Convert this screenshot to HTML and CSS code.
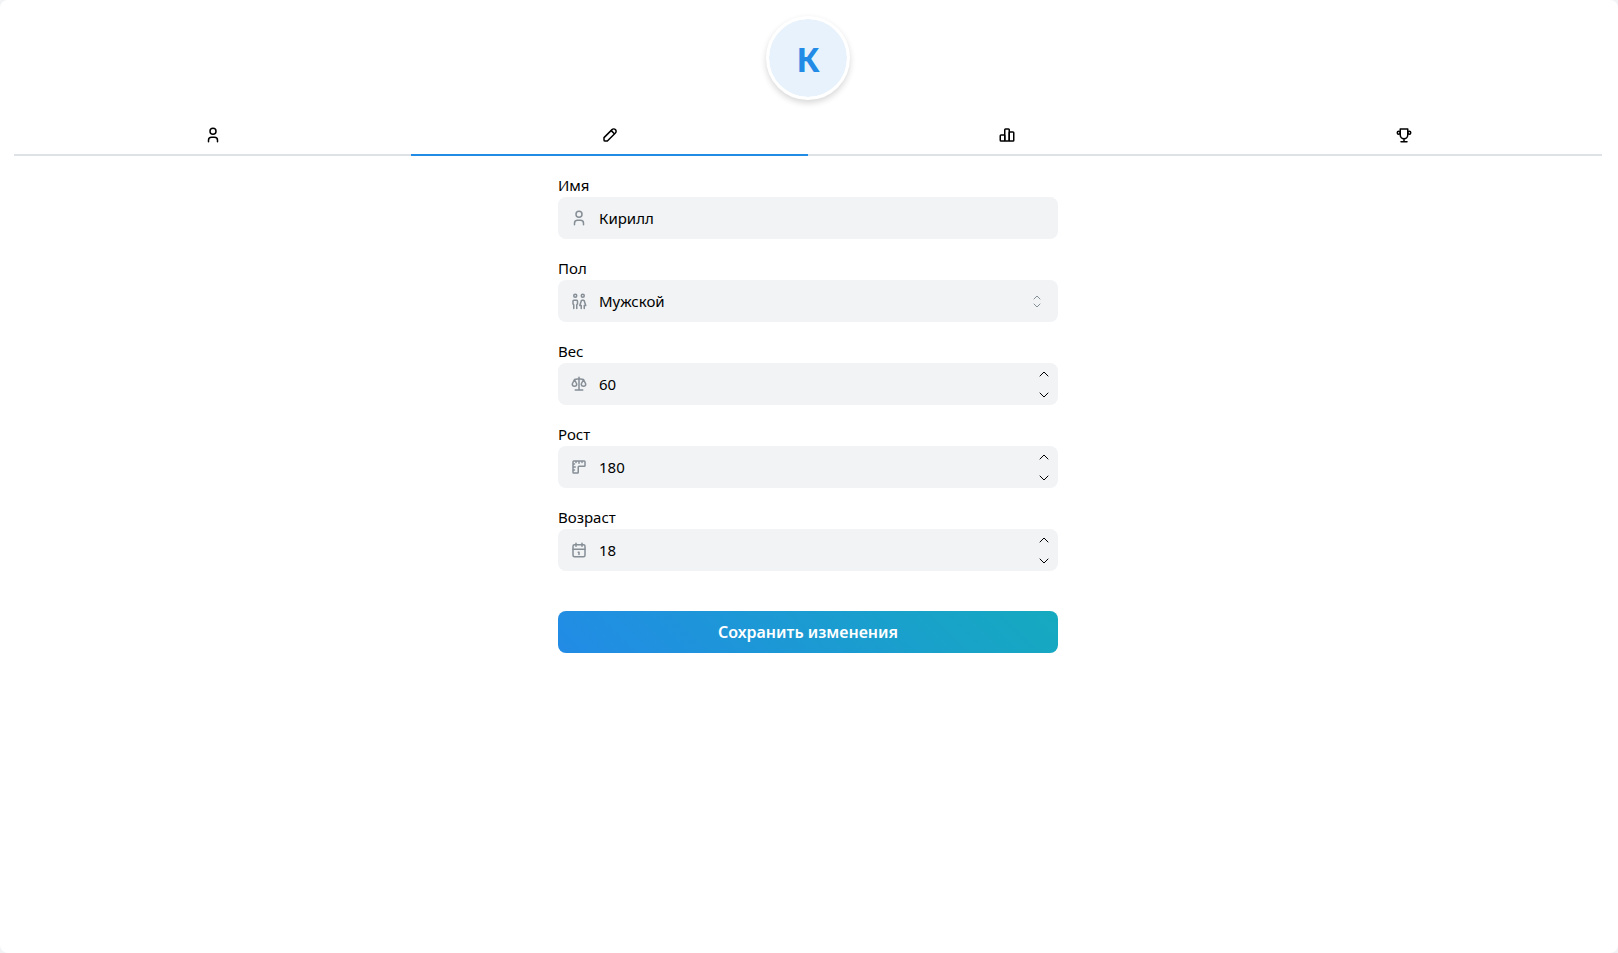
FILE: index.html
```html
<!DOCTYPE html>
<html lang="ru">
<head>
<meta charset="utf-8">
<meta name="viewport" content="width=device-width, initial-scale=1">
<title>Профиль</title>
<link rel="stylesheet" href="styles.css">
</head>
<body>
<main class="page">
  <div class="avatar">К</div>
  <div class="tabs" role="tablist">
    <button class="tab" type="button" role="tab" aria-label="Профиль">
      <svg class="icon" viewBox="0 0 24 24"><circle cx="12" cy="7" r="4"/><path d="M6 21v-2a4 4 0 0 1 4-4h4a4 4 0 0 1 4 4v2"/></svg>
    </button>
    <button class="tab tab-active" type="button" role="tab" aria-selected="true" aria-label="Редактирование">
      <svg class="icon" viewBox="0 0 24 24"><path d="M4 15.500v3a1.500 1.500 0 0 0 1.500 1.500h3L19.200 9.300a3 3 0 0 0-4.500-4.500z"/><path d="M14 6.500l3.500 3.500"/></svg>
    </button>
    <button class="tab" type="button" role="tab" aria-label="Статистика">
      <svg class="icon" viewBox="0 0 24 24"><rect x="3" y="12" width="6" height="8" rx="1"/><rect x="9" y="4" width="6" height="16" rx="1"/><rect x="15" y="8" width="6" height="12" rx="1"/></svg>
    </button>
    <button class="tab" type="button" role="tab" aria-label="Достижения">
      <svg class="icon" viewBox="0 0 24 24"><path d="M8 21h8M12 17v4M7 4h10M17 4v8a5 5 0 0 1-10 0V4"/><circle cx="5" cy="9" r="2"/><circle cx="19" cy="9" r="2"/></svg>
    </button>
  </div>
  <form class="form">
    <div class="field">
      <label class="label" for="name">Имя</label>
      <div class="control">
        <svg class="icon control-icon" viewBox="0 0 24 24"><circle cx="12" cy="7" r="4"/><path d="M6 21v-2a4 4 0 0 1 4-4h4a4 4 0 0 1 4 4v2"/></svg>
        <input class="input" id="name" type="text" value="Кирилл">
      </div>
    </div>
    <div class="field">
      <label class="label" for="sex">Пол</label>
      <div class="control">
        <svg class="icon control-icon" viewBox="0 0 24 24"><circle cx="7" cy="5" r="2"/><path d="M5 22v-5l-1-1v-4a1 1 0 0 1 1-1h4a1 1 0 0 1 1 1v4l-1 1v5"/><circle cx="17" cy="5" r="2"/><path d="M15 22v-4h-2l2-6a1 1 0 0 1 1-1h2a1 1 0 0 1 1 1l2 6h-2v4"/></svg>
        <select class="input" id="sex"><option>Мужской</option><option>Женский</option></select>
        <svg class="icon select-icon" viewBox="0 0 16 16"><path d="M5 6l3-3 3 3M5 11l3 3 3-3"/></svg>
      </div>
    </div>
    <div class="field">
      <label class="label" for="weight">Вес</label>
      <div class="control">
        <svg class="icon control-icon" viewBox="0 0 24 24"><path d="M7 20h10M6 6l6-1 6 1M12 3v17M9 12L6 6l-3 6a3 3 0 0 0 6 0M21 12l-3-6-3 6a3 3 0 0 0 6 0"/></svg>
        <input class="input" id="weight" type="number" value="60">
        <div class="steps">
          <button class="step" type="button" aria-label="Увеличить"><svg class="chevron" viewBox="0 0 10 6"><path d="M1 5l4-4 4 4"/></svg></button>
          <button class="step" type="button" aria-label="Уменьшить"><svg class="chevron" viewBox="0 0 10 6"><path d="M1 1l4 4 4-4"/></svg></button>
        </div>
      </div>
    </div>
    <div class="field">
      <label class="label" for="height">Рост</label>
      <div class="control">
        <svg class="icon control-icon" viewBox="0 0 24 24"><path d="M5 4h14a1 1 0 0 1 1 1v5a1 1 0 0 1-1 1h-7a1 1 0 0 0-1 1v7a1 1 0 0 1-1 1H5a1 1 0 0 1-1-1V5a1 1 0 0 1 1-1M4 8h2M4 12h3M4 16h2M8 4v2M12 4v3M16 4v2"/></svg>
        <input class="input" id="height" type="number" value="180">
        <div class="steps">
          <button class="step" type="button" aria-label="Увеличить"><svg class="chevron" viewBox="0 0 10 6"><path d="M1 5l4-4 4 4"/></svg></button>
          <button class="step" type="button" aria-label="Уменьшить"><svg class="chevron" viewBox="0 0 10 6"><path d="M1 1l4 4 4-4"/></svg></button>
        </div>
      </div>
    </div>
    <div class="field">
      <label class="label" for="age">Возраст</label>
      <div class="control">
        <svg class="icon control-icon" viewBox="0 0 24 24"><rect x="4" y="5" width="16" height="16" rx="2"/><path d="M16 3v4M8 3v4M4 11h16M11 15h1M12 15v3"/></svg>
        <input class="input" id="age" type="number" value="18">
        <div class="steps">
          <button class="step" type="button" aria-label="Увеличить"><svg class="chevron" viewBox="0 0 10 6"><path d="M1 5l4-4 4 4"/></svg></button>
          <button class="step" type="button" aria-label="Уменьшить"><svg class="chevron" viewBox="0 0 10 6"><path d="M1 1l4 4 4-4"/></svg></button>
        </div>
      </div>
    </div>
    <button class="submit" type="submit">Сохранить изменения</button>
  </form>
</main>
</body>
</html>
```
FILE: styles.css
```css
* {
  box-sizing: border-box;
}

body {
  margin: 0;
  background: #f1f3f5;
  color: #000;
  font-family: "Noto Sans", "Open Sans", sans-serif;
  font-size: 15px;
  line-height: 25px;
}

button,
input,
select {
  margin: 0;
  border: 0;
  padding: 0;
  background: none;
  color: inherit;
  font: inherit;
}

button {
  cursor: pointer;
}

.page {
  display: flex;
  flex-direction: column;
  min-height: 100vh;
  padding: 16px 16px 16px 14px;
  border-radius: 8px;
  background: #fff;
}

.avatar {
  display: flex;
  align-items: center;
  justify-content: center;
  align-self: center;
  width: 84px;
  height: 84px;
  border: 3px solid #fff;
  border-radius: 50%;
  background: #e7f2fc;
  background-clip: padding-box;
  box-shadow: 0 3px 6px rgba(0, 0, 0, 0.16);
  padding-top: 2px;
  color: #228be6;
  font-size: 34px;
  font-weight: 700;
}

.icon {
  width: 18px;
  height: 18px;
  fill: none;
  stroke: currentColor;
  stroke-width: 2;
  stroke-linecap: round;
  stroke-linejoin: round;
}

.tabs {
  display: flex;
  margin-top: 16px;
}

.tab {
  display: flex;
  flex: 1;
  align-items: center;
  justify-content: center;
  height: 40px;
  border-bottom: 2px solid #dee2e6;
}

.tab-active {
  border-color: #228be6;
}

.form {
  display: flex;
  flex-direction: column;
  gap: 16px;
  align-self: center;
  width: 100%;
  max-width: 500px;
  margin-top: 16px;
}

.field {
  display: flex;
  flex-direction: column;
}

.label {
  padding-top: 2px;
  line-height: 23px;
}

.control {
  display: grid;
  grid-template-columns: 41px 1fr auto;
  align-items: center;
  height: 42px;
  border-radius: 8px;
  background: #f1f3f5;
}

.control-icon {
  justify-self: center;
  color: #868e96;
}

.input {
  width: 100%;
  height: 42px;
  outline: 0;
  appearance: none;
}

.input[type="number"] {
  appearance: textfield;
}

.select-icon {
  width: 16px;
  height: 16px;
  margin-right: 13px;
  color: #868e96;
  stroke-width: 1;
}

.steps {
  display: flex;
  flex-direction: column;
  width: 28px;
}

.step {
  display: flex;
  align-items: center;
  justify-content: center;
  height: 21px;
}

.chevron {
  width: 10px;
  height: 6px;
  fill: none;
  stroke: currentColor;
  stroke-linecap: round;
  stroke-linejoin: round;
}

.submit {
  height: 42px;
  margin-top: 24px;
  border-radius: 8px;
  background: linear-gradient(45deg, #228be6 0%, #15aabf 100%);
  color: #fff;
  font-size: 16px;
  font-weight: 600;
}
```
